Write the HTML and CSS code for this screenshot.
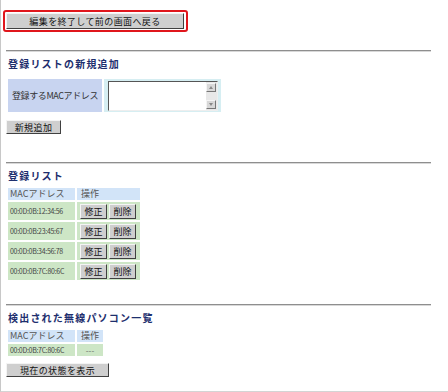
FILE: index.html
```html
<!DOCTYPE html>
<html lang="ja">
<head>
<meta charset="utf-8">
<link rel="stylesheet" href="styles.css">
</head>
<body>
<div class="page">
  <div class="backwrap"><button class="btn btn-back">編集を終了して前の画面へ戻る</button></div>
  <hr class="rule rule-1">
  <h2 class="heading">登録リストの新規追加</h2>
  <table class="formtbl">
    <tr>
      <td class="label">登録するMACアドレス</td>
      <td class="inputcell"><div class="ta"><div class="sb"><span class="arr up"></span><span class="arr dn"></span></div></div></td>
    </tr>
  </table>
  <button class="btn btn-add">新規追加</button>
  <hr class="rule rule-2">
  <h2 class="heading">登録リスト</h2>
  <table class="list">
    <tr><th class="c1">MACアドレス</th><th class="c2">操作</th></tr>
    <tr><td class="mac">00:0D:0B:12:34:56</td><td class="ops"><button class="btn sm">修正</button><button class="btn sm">削除</button></td></tr>
    <tr><td class="mac">00:0D:0B:23:45:67</td><td class="ops"><button class="btn sm">修正</button><button class="btn sm">削除</button></td></tr>
    <tr><td class="mac">00:0D:0B:34:56:78</td><td class="ops"><button class="btn sm">修正</button><button class="btn sm">削除</button></td></tr>
    <tr><td class="mac">00:0D:0B:7C:80:6C</td><td class="ops"><button class="btn sm">修正</button><button class="btn sm">削除</button></td></tr>
  </table>
  <hr class="rule rule-3">
  <h2 class="heading">検出された無線パソコン一覧</h2>
  <table class="list list2">
    <tr><th class="c1">MACアドレス</th><th class="c2b">操作</th></tr>
    <tr><td class="mac mac2">00:0D:0B:7C:80:6C</td><td class="dash">---</td></tr>
  </table>
  <button class="btn btn-state">現在の状態を表示</button>
</div>
</body>
</html>
```

FILE: styles.css
```css
* { box-sizing: border-box; }
html, body { margin: 0; padding: 0; background: #fff; }
body {
  font-family: "Noto Sans CJK JP", "Noto Sans", sans-serif;
  font-size: 9px;
  color: #222;
}
.page {
  width: 448px;
  height: 392px;
  border-left: 1px solid #c8c8c8;
  border-bottom: 1px solid #d4d4d4;
  padding: 10px 0 0 5px;
}
.backwrap {
  display: inline-block;
  border: 2px solid #e0161c;
  border-radius: 3px;
  padding: 1px 2px 1px 1px;
  margin-left: -3px;
  line-height: 0;
}
.btn {
  font-family: "Noto Sans CJK JP", sans-serif;
  font-size: 9px;
  color: #111;
  background: #cfcfcf;
  border: 1px solid;
  border-color: #f4f4f4 #404040 #404040 #f4f4f4;
  padding: 0;
  margin: 0;
  line-height: 13px;
  height: 15px;
  cursor: default;
  letter-spacing: 0.4px;
}
.btn-back { width: 178px; height: 16px; }
.rule {
  border: 0;
  border-top: 1px solid #8e8e8e;
  border-bottom: 1px solid #d8d8d8;
  width: 425px;
  margin: 0;
  height: 0;
}
.rule-1 { margin-top: 18px; }
.rule-2 { margin-top: 28px; }
.rule-3 { margin-top: 22px; }
.heading {
  font-size: 10px;
  font-weight: bold;
  color: #1e2f6e;
  margin: 5px 0 0 2px;
  line-height: 14px;
  letter-spacing: 1.2px;
}
.formtbl {
  border-collapse: separate;
  border-spacing: 2px;
  margin: 6px 0 0 0;
}
.formtbl td { padding: 0; height: 33px; }
.label {
  background: #c8d4f0;
  width: 94px;
  padding: 0 0 0 4px !important;
  font-size: 9px;
  color: #333;
  white-space: nowrap;
  letter-spacing: -0.4px;
}
.inputcell {
  background: #d6eef2;
  width: 117px;
  padding: 0 3px 0 4px !important;
}
.ta {
  width: 110px;
  height: 30px;
  background: #fff;
  border: 1px solid;
  border-color: #555 #eee #eee #555;
  display: flex;
  justify-content: flex-end;
}
.sb {
  width: 11px;
  background: #e8e8e8;
  display: flex;
  flex-direction: column;
  justify-content: space-between;
  padding: 1px 0;
}
.arr {
  display: block;
  width: 10px;
  height: 9px;
  background: #d8d8d8;
  border: 1px solid;
  border-color: #f4f4f4 #777 #777 #f4f4f4;
  position: relative;
}
.arr::after {
  content: "";
  position: absolute;
  left: 2px;
  width: 0; height: 0;
  border-left: 2px solid transparent;
  border-right: 2px solid transparent;
}
.arr.up::after { top: 2px; border-bottom: 3px solid #888; }
.arr.dn::after { top: 2px; border-top: 3px solid #888; }
.btn-add { width: 55px; height: 14px; margin-top: 6px; display: block; }
.list {
  border-collapse: separate;
  border-spacing: 2px;
  margin: 3px 0 0 0;
}
.list th {
  background: #d2e4f8;
  font-weight: normal;
  text-align: left;
  color: #555;
  font-size: 9px;
  height: 12px;
  line-height: 12px;
  padding: 0 0 0 2px;
}
.list .c1 { width: 67px; }
.list .c2 { width: 63px; padding-left: 4px; }
.list .c2b { width: 26px; padding-left: 4px; }
.list td {
  background: #cde6c6;
  padding: 0;
}
.mac {
  font-size: 7px;
  color: #444;
  height: 18px;
  padding-left: 2px !important;
  letter-spacing: -0.3px;
}
.mac2 { height: 12px; }
.ops { padding: 0 0 0 3px !important; white-space: nowrap; }
.btn.sm { width: 27px; height: 15px; margin-right: 2px; font-size: 9px; letter-spacing: 0; }
.dash { color: #666; text-align: center; font-size: 8px; }
.list2 { margin-top: 3px; }
.btn-state { width: 103px; height: 14px; margin-top: 5px; display: block; }
```
